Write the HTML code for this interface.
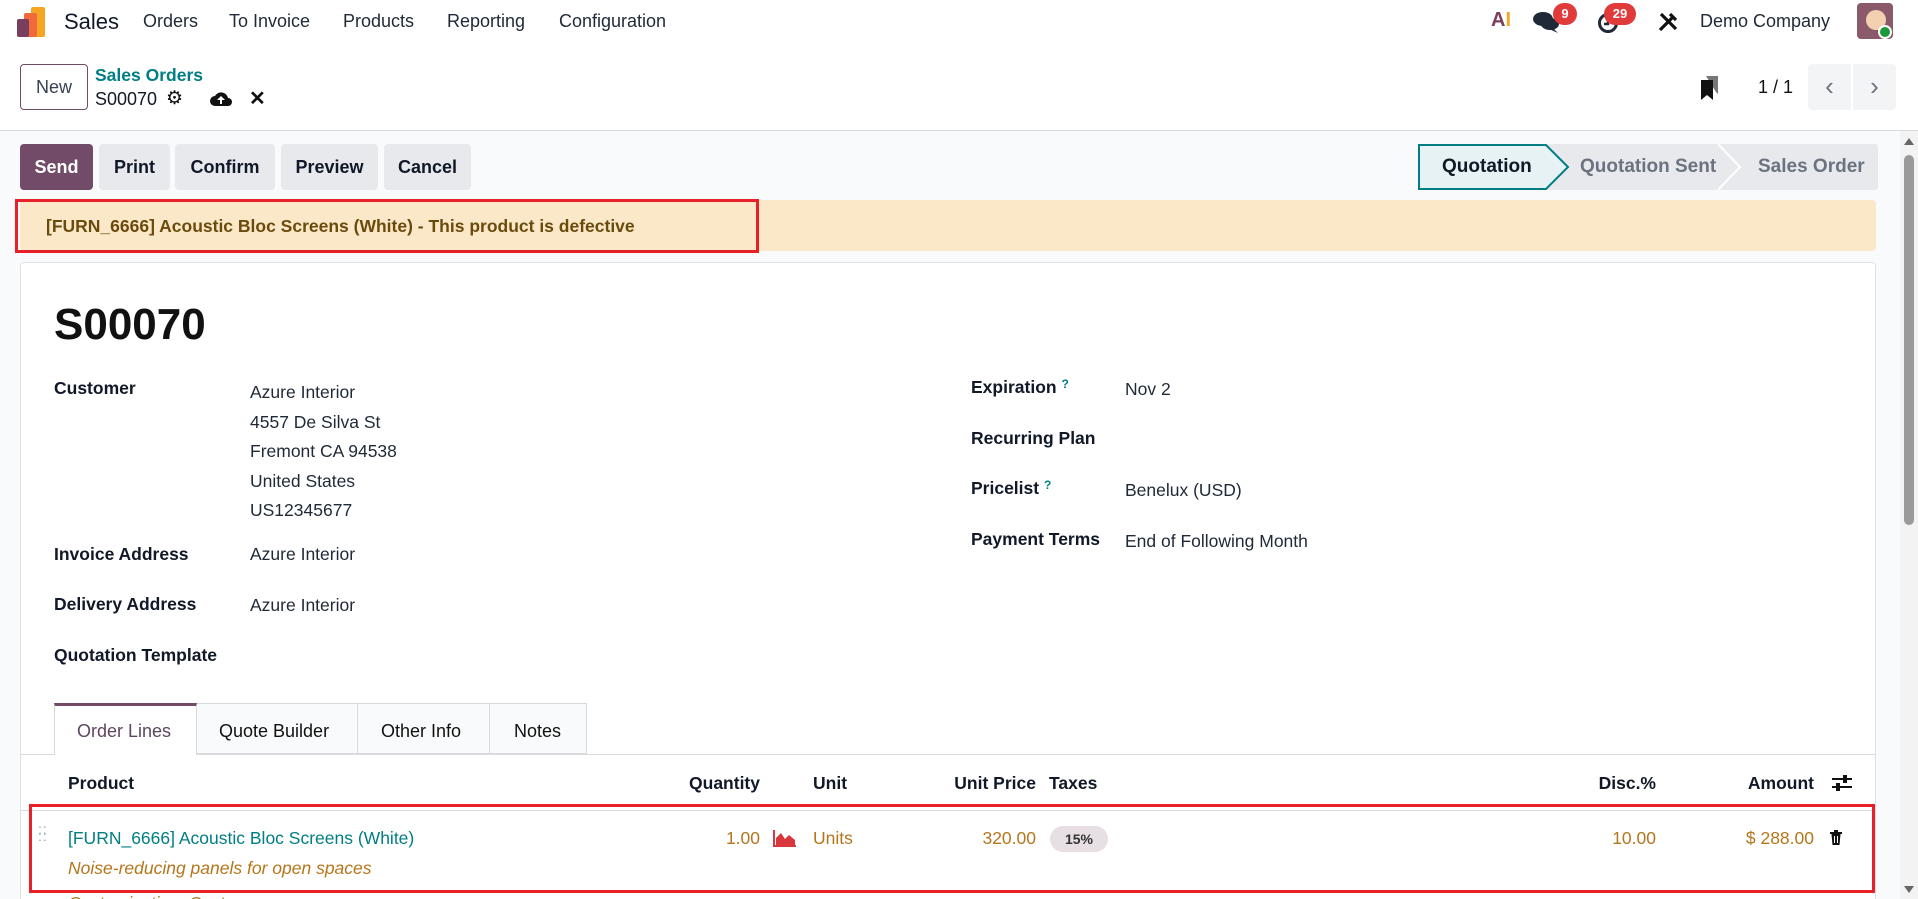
<!DOCTYPE html>
<html><head><meta charset="utf-8"><style>
*{box-sizing:border-box;margin:0;padding:0}
html,body{width:1918px;height:899px;overflow:hidden}
body{font-family:"Liberation Sans",sans-serif;color:#1f2937;background:#f9fafb;position:relative;font-size:17.5px}
.a{position:absolute;white-space:nowrap}
.nav{position:absolute;left:0;top:0;width:1918px;height:44px;background:#fff}
.cp{position:absolute;left:0;top:44px;width:1918px;height:87px;background:#fff;border-bottom:1px solid #d8dadd}
.btn{position:absolute;top:144px;height:46px;background:#e7e9ed;border-radius:4px;font-weight:bold;font-size:18px;line-height:46px;text-align:center;color:#111827}
.b{font-weight:bold;color:#111827}
.v{color:#1f2937}
.q{color:#017e84;font-size:12px;font-weight:bold;vertical-align:top}
.o{color:#b5761b}
</style></head><body>
<div class="nav">
  <svg class="a" style="left:17px;top:7px" width="32" height="30" viewBox="0 0 32 30"><rect x="14" y="0" width="14" height="30" rx="2" fill="#f5a623"/><rect x="7" y="6" width="13" height="24" rx="2" fill="#f06a3b"/><rect x="0" y="12" width="12" height="18" rx="2" fill="#7a3f5e"/></svg>
  <div class="a" style="left:64px;top:9px;font-size:22px;color:#111827">Sales</div>
  <div class="a" style="left:143px;top:11px;font-size:18px">Orders</div>
  <div class="a" style="left:229px;top:11px;font-size:18px">To Invoice</div>
  <div class="a" style="left:343px;top:11px;font-size:18px">Products</div>
  <div class="a" style="left:447px;top:11px;font-size:18px">Reporting</div>
  <div class="a" style="left:559px;top:11px;font-size:18px">Configuration</div>
  <div class="a" style="left:1491px;top:9px;font-size:20px;font-weight:bold;color:#7a3f5e">A<span style="color:#f5a623">I</span></div>
  <svg class="a" style="left:1533px;top:10px" width="28" height="24" viewBox="0 0 28 24"><ellipse cx="10" cy="9" rx="10" ry="7" fill="#1f2937"/><ellipse cx="17" cy="14" rx="9" ry="6" fill="#1f2937"/><path d="M20 18 L25 23 L16 19Z" fill="#1f2937"/></svg>
  <div class="a" style="left:1553px;top:3px;width:24px;height:22px;border-radius:11px;background:#e03a3a;color:#fff;font-size:13px;font-weight:bold;text-align:center;line-height:22px">9</div>
  <svg class="a" style="left:1597px;top:12px" width="22" height="22" viewBox="0 0 22 22"><circle cx="11" cy="11" r="8.5" fill="none" stroke="#1f2937" stroke-width="3"/><path d="M11 6v6h-4" fill="none" stroke="#1f2937" stroke-width="2.5"/></svg>
  <div class="a" style="left:1604px;top:3px;width:32px;height:22px;border-radius:11px;background:#e03a3a;color:#fff;font-size:13px;font-weight:bold;text-align:center;line-height:22px">29</div>
  <svg class="a" style="left:1657px;top:11px" width="22" height="22" viewBox="0 0 22 22"><path d="M3 19 L17 5 M13 3 L19 9 M4 3 L19 18" stroke="#111" stroke-width="3.2" fill="none"/></svg>
  <div class="a" style="left:1700px;top:11px;font-size:18px">Demo Company</div>
  <div class="a" style="left:1857px;top:3px;width:36px;height:36px;border-radius:4px;background:#8a5a6a"></div>
  <div class="a" style="left:1866px;top:10px;width:20px;height:20px;border-radius:50%;background:#f2d0b0"></div>
  <div class="a" style="left:1878px;top:25px;width:14px;height:14px;border-radius:50%;background:#1a9a3a;border:2px solid #fff"></div>
</div>
<div class="cp">
  <div class="a" style="left:20px;top:20px;width:68px;height:46px;border:1px solid #714b67;border-radius:4px;text-align:center;line-height:44px;font-size:18px;color:#374151">New</div>
  <div class="a" style="left:95px;top:21px;font-size:17.5px;color:#017e84;font-weight:bold">Sales Orders</div>
  <div class="a" style="left:95px;top:45px;font-size:18px;color:#111827">S00070</div>
  <div class="a" style="left:166px;top:43px;font-size:19px;color:#111">⚙</div>
  <svg class="a" style="left:210px;top:46px" width="22" height="17" viewBox="0 0 22 17"><path d="M5 16a5 5 0 0 1 0-10 7 7 0 0 1 13 2 4 4 0 0 1 0 8z" fill="#111"/><path d="M11 6l-4 4h3v4h2v-4h3z" fill="#fff"/></svg>
  <div class="a" style="left:249px;top:42px;font-size:20px;font-weight:bold;color:#111">✕</div>
  <svg class="a" style="left:1700px;top:32px" width="20" height="24" viewBox="0 0 20 24"><path d="M6 0h12v18l-2-2z" fill="#777"/><path d="M1 4h12v20l-6-5-6 5z" fill="#111"/></svg>
  <div class="a" style="left:1758px;top:33px;font-size:18px;color:#111">1 / 1</div>
  <div class="a" style="left:1808px;top:20px;width:43px;height:46px;background:#f3f4f6;border-radius:4px 0 0 4px;text-align:center;line-height:44px;color:#6b7280;font-size:26px">&#x2039;</div>
  <div class="a" style="left:1853px;top:20px;width:43px;height:46px;background:#f3f4f6;border-radius:0 4px 4px 0;text-align:center;line-height:44px;color:#6b7280;font-size:26px">&#x203A;</div>
</div>
<div class="btn" style="left:20px;width:73px;background:#714b67;color:#fff">Send</div>
<div class="btn" style="left:99px;width:71px">Print</div>
<div class="btn" style="left:175px;width:100px">Confirm</div>
<div class="btn" style="left:281px;width:97px">Preview</div>
<div class="btn" style="left:384px;width:87px">Cancel</div>
<svg class="a" style="left:1418px;top:144px" width="460" height="46" viewBox="0 0 460 46"><rect x="0" y="0" width="460" height="46" fill="#e7e9ed" rx="3"/><path d="M1 1H128L150 23L128 45H1Z" fill="#e6f2f3" stroke="#017e84" stroke-width="2"/><path d="M300 0L322 23L300 46" fill="none" stroke="#fff" stroke-width="2"/></svg>
<div class="a b" style="left:1442px;top:156px;font-size:19px">Quotation</div>
<div class="a" style="left:1580px;top:156px;font-size:19px;font-weight:bold;color:#6b7280">Quotation Sent</div>
<div class="a" style="left:1758px;top:156px;font-size:19px;font-weight:bold;color:#6b7280">Sales Order</div>
<div class="a" style="left:20px;top:200px;width:1856px;height:51px;background:#fbe8c9;border-radius:4px"></div>
<div class="a" style="left:15px;top:199px;width:744px;height:54px;border:3.5px solid #e8202a"></div>
<div class="a" style="left:46px;top:216px;font-size:17.5px;font-weight:bold;color:#6b4b0c">[FURN_6666] Acoustic Bloc Screens (White) - This product is defective</div>
<div class="a" style="left:20px;top:262px;width:1856px;height:637px;background:#fff;border:1px solid #dee2e6;border-bottom:none;border-radius:4px 4px 0 0"></div>
<div class="a" style="left:54px;top:300px;font-size:44px;font-weight:bold;color:#111">S00070</div>
<div class="a b" style="left:54px;top:378px">Customer</div>
<div class="a v" style="left:250px;top:378px;line-height:29.5px">Azure Interior<br>4557 De Silva St<br>Fremont CA 94538<br>United States<br>US12345677</div>
<div class="a b" style="left:54px;top:544px">Invoice Address</div><div class="a v" style="left:250px;top:544px">Azure Interior</div>
<div class="a b" style="left:54px;top:594px">Delivery Address</div><div class="a v" style="left:250px;top:595px">Azure Interior</div>
<div class="a b" style="left:54px;top:645px">Quotation Template</div>
<div class="a b" style="left:971px;top:377px">Expiration <span class="q">?</span></div><div class="a v" style="left:1125px;top:379px">Nov 2</div>
<div class="a b" style="left:971px;top:428px">Recurring Plan</div>
<div class="a b" style="left:971px;top:478px">Pricelist <span class="q">?</span></div><div class="a v" style="left:1125px;top:480px">Benelux (USD)</div>
<div class="a b" style="left:971px;top:529px">Payment Terms</div><div class="a v" style="left:1125px;top:531px">End of Following Month</div>
<div class="a" style="left:20px;top:754px;width:1856px;border-top:1px solid #d8dadd"></div>
<div class="a" style="left:54px;top:703px;width:143px;height:52px;background:#fff;border:1px solid #d8dadd;border-bottom:none;border-top:3px solid #714b67"></div>
<div class="a" style="left:197px;top:703px;width:161px;height:51px;background:#f9fafb;border:1px solid #d8dadd;border-left:none"></div>
<div class="a" style="left:358px;top:703px;width:132px;height:51px;background:#f9fafb;border:1px solid #d8dadd;border-left:none"></div>
<div class="a" style="left:490px;top:703px;width:97px;height:51px;background:#f9fafb;border:1px solid #d8dadd;border-left:none"></div>
<div class="a" style="left:77px;top:721px;font-size:18px;color:#5f4660">Order Lines</div>
<div class="a" style="left:219px;top:721px;font-size:18px;color:#111">Quote Builder</div>
<div class="a" style="left:381px;top:721px;font-size:18px;color:#111">Other Info</div>
<div class="a" style="left:514px;top:721px;font-size:18px;color:#111">Notes</div>
<div class="a b" style="left:68px;top:773px">Product</div>
<div class="a b" style="left:660px;top:773px;width:100px;text-align:right">Quantity</div>
<div class="a b" style="left:813px;top:773px">Unit</div>
<div class="a b" style="left:900px;top:773px;width:136px;text-align:right">Unit Price</div>
<div class="a b" style="left:1049px;top:773px">Taxes</div>
<div class="a b" style="left:1556px;top:773px;width:100px;text-align:right">Disc.%</div>
<div class="a b" style="left:1714px;top:773px;width:100px;text-align:right">Amount</div>
<svg class="a" style="left:1832px;top:774px" width="20" height="18" viewBox="0 0 20 18"><path d="M0 5h20M0 13h20" stroke="#111" stroke-width="2"/><rect x="11" y="1" width="4" height="8" fill="#111"/><rect x="4" y="9" width="4" height="8" fill="#111"/></svg>
<div class="a" style="left:20px;top:810px;width:1856px;border-top:1px solid #d8dadd"></div>
<div class="a" style="left:29px;top:804px;width:1846px;height:89px;border:3.5px solid #e8202a"></div>
<div class="a" style="left:38px;top:826px;font-size:14px;color:#8fa9b8;line-height:7px;letter-spacing:1px">::<br>::</div>
<div class="a" style="left:68px;top:828px;color:#017e84">[FURN_6666] Acoustic Bloc Screens (White)</div>
<div class="a o" style="left:68px;top:858px;font-style:italic">Noise-reducing panels for open spaces</div>
<div class="a o" style="left:68px;top:893px;font-style:italic">Customization: Custom</div>
<div class="a o" style="left:660px;top:828px;width:100px;text-align:right">1.00</div>
<svg class="a" style="left:773px;top:829px" width="24" height="18" viewBox="0 0 24 18"><path d="M1 1v16h22" stroke="#d9363e" stroke-width="2" fill="none"/><path d="M3 16V9l5-5 4 6 4-4 6 5v5z" fill="#d9363e"/></svg>
<div class="a o" style="left:813px;top:828px">Units</div>
<div class="a o" style="left:900px;top:828px;width:136px;text-align:right">320.00</div>
<div class="a" style="left:1050px;top:826px;width:58px;height:26px;border-radius:13px;background:#e7dfe3;font-size:14px;font-weight:bold;text-align:center;line-height:26px;color:#333">15%</div>
<div class="a o" style="left:1556px;top:828px;width:100px;text-align:right">10.00</div>
<div class="a o" style="left:1714px;top:828px;width:100px;text-align:right">$ 288.00</div>
<svg class="a" style="left:1829px;top:830px" width="14" height="16" viewBox="0 0 14 16"><path d="M1 3h12M5 1h4" stroke="#111" stroke-width="2"/><path d="M2.5 4h9l-1 11h-7z" fill="#111"/><path d="M5.5 6v7M8.5 6v7" stroke="#fff" stroke-width="1"/></svg>
<div class="a" style="left:1900px;top:131px;width:18px;height:768px;background:#f3f3f3"></div>
<div class="a" style="left:1904px;top:138px;width:0;height:0;border-left:5px solid transparent;border-right:5px solid transparent;border-bottom:7px solid #666"></div>
<div class="a" style="left:1904px;top:155px;width:10px;height:370px;background:#9a9a9a;border-radius:5px"></div>
<div class="a" style="left:1904px;top:886px;width:0;height:0;border-left:5px solid transparent;border-right:5px solid transparent;border-top:7px solid #666"></div>
</body></html>
